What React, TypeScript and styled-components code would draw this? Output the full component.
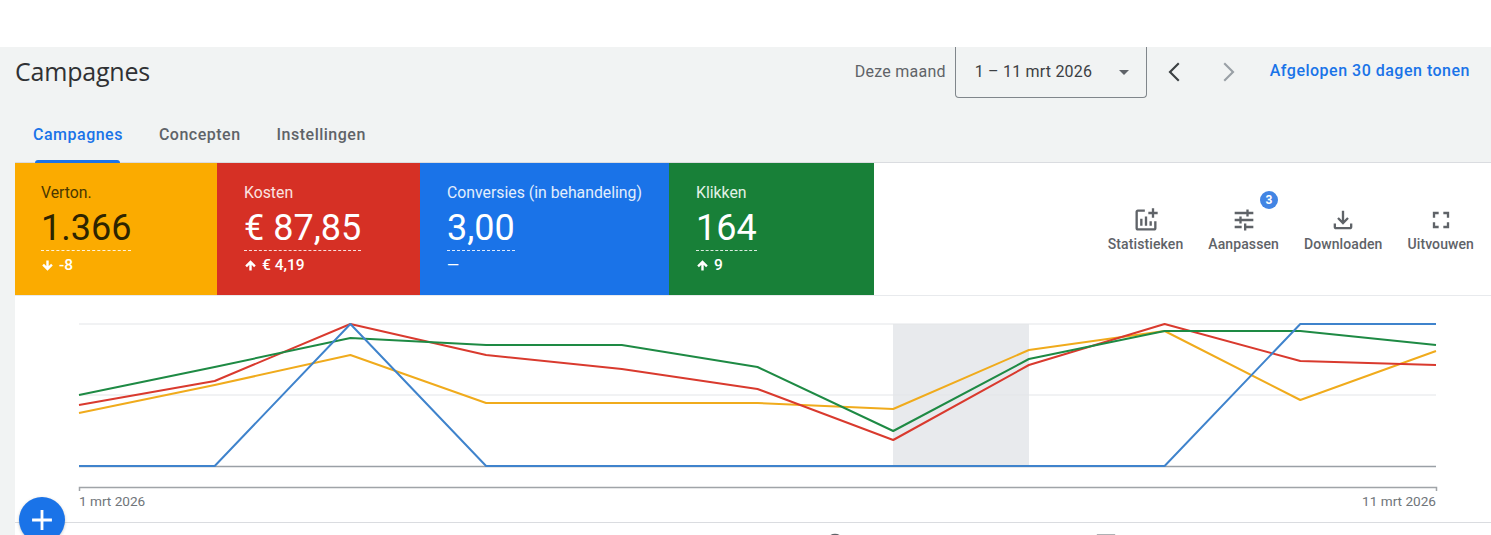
import React from 'react';
import styled, { createGlobalStyle } from 'styled-components';

const GlobalStyle = createGlobalStyle`
  html, body {
    margin: 0;
    padding: 0;
    background: #ffffff;
    font-family: Roboto, 'Liberation Sans', sans-serif;
  }
`;

const Page = styled.div`
  position: relative;
  height: 535px;
  overflow: hidden;
  padding-top: 47px;
  box-sizing: border-box;
  background: #ffffff;
`;

const Shell = styled.div`
  height: 488px;
  padding-left: 15px;
  background: #f1f3f3;
`;

const HeaderRow = styled.header`
  display: flex;
  align-items: flex-start;
  justify-content: space-between;
  height: 63px;
  padding-right: 21px;
`;

const Title = styled.h1`
  margin: 7px 0 0;
  font-family: 'Open Sans', Roboto, sans-serif;
  font-size: 25px;
  line-height: 34px;
  font-weight: 400;
  letter-spacing: -0.2px;
  color: #303134;
`;

const DateControls = styled.div`
  display: flex;
  align-items: flex-start;
  font-size: 16px;
  line-height: 20px;
`;

const PeriodLabel = styled.span`
  margin: 15px 9px 0 0;
  letter-spacing: 0.25px;
  color: #5f6368;
`;

const DateSelect = styled.div`
  display: flex;
  align-items: center;
  justify-content: space-between;
  box-sizing: border-box;
  width: 192px;
  height: 51px;
  padding: 0 17px 0 19px;
  border: 1px solid #80868b;
  border-top: none;
  border-radius: 0 0 4px 4px;
  letter-spacing: 0.2px;
  color: #3c4043;
`;

const Caret = styled.span`
  width: 0;
  height: 0;
  border-left: 5px solid transparent;
  border-right: 5px solid transparent;
  border-top: 5px solid #5f6368;
`;

const NavButton = styled.span<{ $muted?: boolean }>`
  display: flex;
  justify-content: center;
  width: 55px;
  margin-top: 12px;
  color: ${p => (p.$muted ? '#9aa0a6' : '#3c4043')};
`;

const RangeLink = styled.a`
  margin: 14px 0 0 13px;
  font-weight: 500;
  letter-spacing: 0.5px;
  color: #1a73e8;
`;

const TabRow = styled.nav`
  display: flex;
  gap: 36px;
  height: 53px;
  padding-left: 18px;
`;

const Tab = styled.div<{ $active?: boolean }>`
  position: relative;
  padding-top: 15px;
  font-size: 16px;
  line-height: 20px;
  font-weight: 500;
  letter-spacing: 0.5px;
  color: ${p => (p.$active ? '#1a73e8' : '#5f6368')};

  ${p =>
    p.$active &&
    `&::after {
      content: '';
      position: absolute;
      left: 2px;
      right: 3px;
      bottom: 0;
      height: 3px;
      border-radius: 3px 3px 0 0;
      background: #1a73e8;
    }`}
`;

const Panel = styled.div`
  background: #ffffff;
  border-top: 1px solid #dadce0;
  margin-top: -1px;
`;

const SummaryRow = styled.section`
  display: flex;
  justify-content: space-between;
  height: 132px;
  border-bottom: 1px solid #e8eaed;
`;

const Cards = styled.div`
  display: flex;
`;

const Card = styled.div<{ $bg: string; $fg: string; $label: string; $width: number }>`
  box-sizing: border-box;
  width: ${p => p.$width}px;
  padding: 21px 0 0 ${p => (p.$width === 202 ? 26 : 27)}px;
  background: ${p => p.$bg};
  color: ${p => p.$fg};

  & > span:first-child {
    color: ${p => p.$label};
  }
`;

const CardLabel = styled.span`
  display: block;
  font-size: 15.8px;
  line-height: 18px;
`;

const CardValue = styled.div`
  width: fit-content;
  margin-top: 5px;
  font-size: 36px;
  line-height: 43px;
  border-bottom: 1px dashed rgba(255, 255, 255, 0.85);
`;

const Delta = styled.div`
  display: flex;
  align-items: center;
  gap: 5px;
  margin-top: 6px;
  font-size: 15.5px;
  line-height: 16px;
  font-weight: 500;
  color: #ffffff;

  svg {
    stroke: currentColor;
    stroke-width: 2.4;
  }
`;

const Actions = styled.div`
  display: flex;
  gap: 25px;
  padding: 43px 17px 0 0;
`;

const Action = styled.div`
  position: relative;
  display: flex;
  flex-direction: column;
  align-items: center;
  gap: 2px;
  font-size: 14px;
  line-height: 16px;
  font-weight: 500;
  letter-spacing: 0.1px;
  color: #5f6368;
`;

const Badge = styled.span`
  position: absolute;
  top: -15px;
  right: 1px;
  width: 18px;
  height: 18px;
  border-radius: 50%;
  background: #4285e4;
  color: #ffffff;
  font-size: 12px;
  line-height: 18px;
  font-weight: 700;
  text-align: center;
`;

const ChartSection = styled.section`
  height: 227px;
  box-sizing: border-box;
  border-bottom: 1px solid #dadce0;
`;

const ChartSvg = styled.svg`
  display: block;
`;

const AxisLabels = styled.div`
  display: flex;
  justify-content: space-between;
  padding: 0 55px 0 64px;
  font-size: 13.6px;
  line-height: 16px;
  color: #70757a;
`;

const BottomTools = styled.div`
  display: flex;
  gap: 251px;
  padding: 9px 0 0 810px;
  color: #5f6368;
`;

const Fab = styled.button`
  position: absolute;
  left: 19px;
  top: 497px;
  display: flex;
  align-items: center;
  justify-content: center;
  width: 46px;
  height: 46px;
  padding: 0;
  border: none;
  border-radius: 50%;
  background: #1a73e8;
  color: #ffffff;
  box-shadow: 0 1px 3px rgba(60, 64, 67, 0.3);
`;

const Icon: React.FC<{ d: string; size?: number }> = ({ d, size = 24 }) => (
  <svg width={size} height={size} viewBox="0 0 24 24" fill="currentColor">
    <path d={d} />
  </svg>
);

const ARROW_UP = 'M4 12l1.41 1.41L11 7.83V20h2V7.83l5.58 5.59L20 12l-8-8-8 8z';
const ARROW_DOWN = 'M20 12l-1.41-1.41L13 16.17V4h-2v12.17l-5.58-5.59L4 12l8 8 8-8z';
const ICONS = {
  stats:
    'M22 5v2h-3v3h-2V7h-3V5h3V2h2v3h3zm-3 14H5V5h6V3H5c-1.1 0-2 .9-2 2v14c0 1.1.9 2 2 2h14c1.1 0 2-.9 2-2v-6h-2v6zm-4-6v4h2v-4h-2zm-4 4h2V9h-2v8zm-2 0v-6H7v6h2z',
  tune:
    'M4 17v2h6v-2H4zM4 5v2h10V5H4zm10 16v-2h6v-2h-6v-2h-2v6h2zM8 9v2H4v2h4v2h2V9H8zm12 4v-2H10v2h10zm-6-4h2V7h4V5h-4V3h-2v6z',
  download:
    'M18 15v3H6v-3H4v3c0 1.1.9 2 2 2h12c1.1 0 2-.9 2-2v-3h-2zm-1-4l-1.41-1.41L13 12.17V4h-2v8.17L8.41 9.59 7 11l5 5 5-5z',
  expand:
    'M7 14H5v5h5v-2H7v-3zm-2-4h2V7h3V5H5v5zm12 7h-3v2h5v-5h-2v3zM14 5v2h3v3h2V5h-5z',
};

const xs = [79, 214.7, 350.4, 486.1, 621.8, 757.5, 893.2, 1028.9, 1164.6, 1300.3, 1436];
const series = [
  { color: '#f0ab1c', ys: [413, 385, 355, 403, 403, 403, 409, 350, 331, 400, 351] },
  { color: '#d93a2e', ys: [405, 381, 324, 355, 369, 389, 440, 365, 324, 361, 365] },
  { color: '#1e8a44', ys: [395, 367, 338, 345, 345, 367, 431, 359, 331, 331, 345] },
  { color: '#3f83cc', ys: [466, 466, 324, 466, 466, 466, 466, 466, 466, 324, 324] },
];

const cards = [
  { label: 'Verton.', value: '1.366', delta: '-8', dir: 'down', bg: '#fbab00', fg: '#2d2400', labelColor: '#4a3800', width: 202 },
  { label: 'Kosten', value: '€ 87,85', delta: '€ 4,19', dir: 'up', bg: '#d63025', fg: '#ffffff', labelColor: '#fbe3e1', width: 203 },
  { label: 'Conversies (in behandeling)', value: '3,00', delta: '—', dir: '', bg: '#1a73e8', fg: '#ffffff', labelColor: '#e3eefc', width: 249 },
  { label: 'Klikken', value: '164', delta: '9', dir: 'up', bg: '#188038', fg: '#ffffff', labelColor: '#e3f2e7', width: 205 },
];

const App: React.FC = () => (
  <Page>
    <GlobalStyle />
    <Shell>
      <HeaderRow>
        <Title>Campagnes</Title>
        <DateControls>
          <PeriodLabel>Deze maand</PeriodLabel>
          <DateSelect>
            <span>1 – 11 mrt 2026</span>
            <Caret />
          </DateSelect>
          <NavButton>
            <Icon d="M17.1 4.6L15.7 3.2 6.9 12l8.8 8.8 1.4-1.4L9.7 12z" size={26} />
          </NavButton>
          <NavButton $muted>
            <Icon d="M6.9 19.4L8.3 20.8l8.8-8.8L8.3 3.2 6.9 4.6 14.3 12z" size={26} />
          </NavButton>
          <RangeLink>Afgelopen 30 dagen tonen</RangeLink>
        </DateControls>
      </HeaderRow>

      <TabRow>
        <Tab $active>Campagnes</Tab>
        <Tab>Concepten</Tab>
        <Tab>Instellingen</Tab>
      </TabRow>

      <Panel>
        <SummaryRow>
          <Cards>
            {cards.map(c => (
              <Card key={c.label} $bg={c.bg} $fg={c.fg} $label={c.labelColor} $width={c.width}>
                <CardLabel>{c.label}</CardLabel>
                <CardValue>{c.value}</CardValue>
                <Delta>
                  {c.dir && <Icon d={c.dir === 'up' ? ARROW_UP : ARROW_DOWN} size={13} />}
                  <span>{c.delta}</span>
                </Delta>
              </Card>
            ))}
          </Cards>
          <Actions>
            <Action>
              <Icon d={ICONS.stats} size={28} />
              Statistieken
            </Action>
            <Action>
              <Badge>3</Badge>
              <Icon d={ICONS.tune} size={28} />
              Aanpassen
            </Action>
            <Action>
              <Icon d={ICONS.download} size={28} />
              Downloaden
            </Action>
            <Action>
              <Icon d={ICONS.expand} size={28} />
              Uitvouwen
            </Action>
          </Actions>
        </SummaryRow>

        <ChartSection>
          <ChartSvg width="1476" height="197" viewBox="15 296 1476 197" fill="none">
            <rect x="893" y="324" width="136" height="142" fill="#e8eaed" />
            <path d="M79 324H1436M79 395H1436" stroke="#e3e5e8" strokeWidth="1" />
            <path d="M79 466.5H1436" stroke="#9aa0a6" strokeWidth="1.5" />
            <path d="M79.5 491V487.5H1436.5V491" stroke="#a0a4a8" strokeWidth="1.5" />
            {series.map(s => (
              <polyline
                key={s.color}
                points={s.ys.map((y, i) => `${xs[i]},${y}`).join(' ')}
                stroke={s.color}
                strokeWidth="2"
                strokeLinejoin="round"
              />
            ))}
          </ChartSvg>
          <AxisLabels>
            <span>1 mrt 2026</span>
            <span>11 mrt 2026</span>
          </AxisLabels>
        </ChartSection>

        <BottomTools>
          <Icon d="M12 2a10 10 0 1 0 0 20 10 10 0 0 0 0-20z" size={20} />
          <Icon d="M1 3h22v18H1z" size={20} />
        </BottomTools>
      </Panel>
    </Shell>
    <Fab aria-label="Toevoegen">
      <Icon d="M19 13h-6v6h-2v-6H5v-2h6V5h2v6h6v2z" size={34} />
    </Fab>
  </Page>
);

export default App;
